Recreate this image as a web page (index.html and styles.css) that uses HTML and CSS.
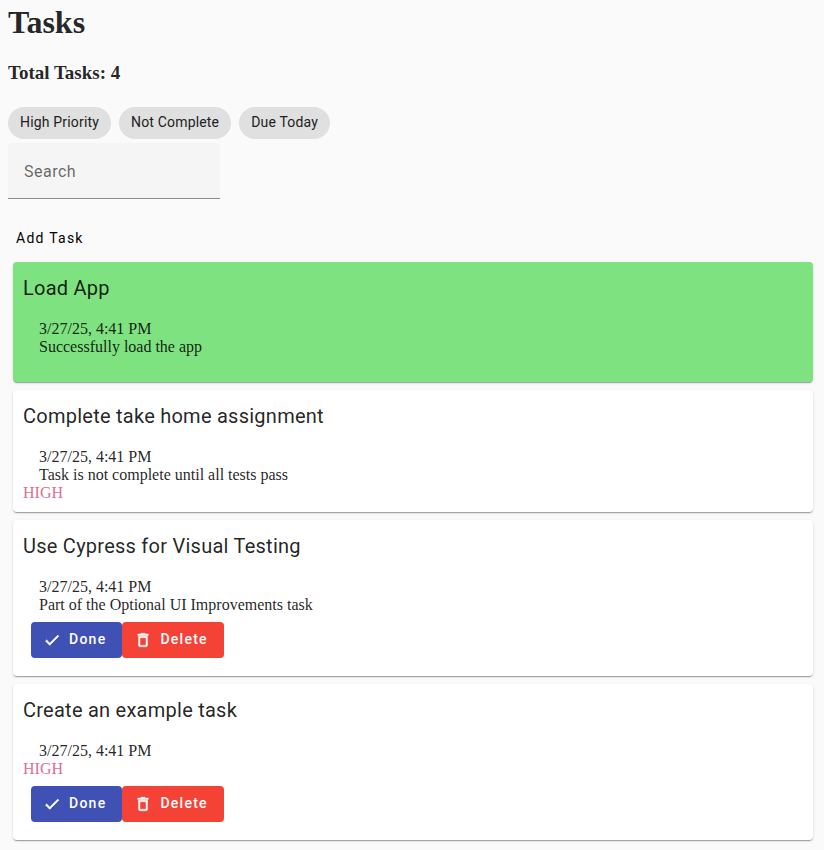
FILE: index.html
```html
<!DOCTYPE html>
<html lang="en">
<head>
  <meta charset="utf-8">
  <meta name="viewport" content="width=device-width, initial-scale=1">
  <title>Tasks</title>
  <link rel="stylesheet" href="styles.css">
</head>
<body>
  <svg class="icon-defs" aria-hidden="true">
    <symbol id="check" viewBox="0 0 24 24"><path stroke="currentColor" d="M9 16.17L4.83 12l-1.42 1.41L9 19 21 7l-1.41-1.41z"/></symbol>
    <symbol id="trash" viewBox="0 0 24 24"><path stroke="currentColor" stroke-width=".6" d="M6 19c0 1.1.9 2 2 2h8c1.1 0 2-.9 2-2V7H6v12zM8 9h8v10H8V9zm7.5-5l-1-1h-5l-1 1H5v2h14V4z"/></symbol>
  </svg>
  <main class="page">
    <h1 class="page-title">Tasks</h1>
    <h3 class="total">Total Tasks: 4</h3>

    <div class="chips">
      <button class="chip" type="button">High Priority</button>
      <button class="chip" type="button">Not Complete</button>
      <button class="chip" type="button">Due Today</button>
    </div>

    <div class="field">
      <input class="field-input" id="search" type="text" placeholder=" ">
      <label class="field-label" for="search">Search</label>
    </div>

    <button class="button button-text" type="button">Add Task</button>

    <section class="task-list">
      <article class="card card-done">
        <h2 class="card-title">Load App</h2>
        <div class="card-content">
          <div>3/27/25, 4:41 PM</div>
          <div>Successfully load the app</div>
        </div>
      </article>

      <article class="card">
        <h2 class="card-title">Complete take home assignment</h2>
        <div class="card-content">
          <div>3/27/25, 4:41 PM</div>
          <div>Task is not complete until all tests pass</div>
        </div>
        <div class="priority">HIGH</div>
      </article>

      <article class="card">
        <h2 class="card-title">Use Cypress for Visual Testing</h2>
        <div class="card-content">
          <div>3/27/25, 4:41 PM</div>
          <div>Part of the Optional UI Improvements task</div>
        </div>
        <div class="card-actions">
          <button class="button button-primary" type="button"><svg class="icon" aria-hidden="true"><use href="#check"/></svg>Done</button>
          <button class="button button-warn" type="button"><svg class="icon" aria-hidden="true"><use href="#trash"/></svg>Delete</button>
        </div>
      </article>

      <article class="card">
        <h2 class="card-title">Create an example task</h2>
        <div class="card-content">
          <div>3/27/25, 4:41 PM</div>
        </div>
        <div class="priority">HIGH</div>
        <div class="card-actions">
          <button class="button button-primary" type="button"><svg class="icon" aria-hidden="true"><use href="#check"/></svg>Done</button>
          <button class="button button-warn" type="button"><svg class="icon" aria-hidden="true"><use href="#trash"/></svg>Delete</button>
        </div>
      </article>
    </section>
  </main>
</body>
</html>
```

FILE: styles.css
```css
* {
  box-sizing: border-box;
}

body {
  margin: 0;
  background: #fafafa;
  color: rgba(0, 0, 0, 0.87);
  font-family: "Liberation Serif", "Times New Roman", serif;
  font-size: 16px;
  line-height: 18px;
}

.icon-defs {
  display: none;
}

.page {
  padding: 4px 8px 8px;
}

.page-title {
  margin: 0 0 22px;
  font-size: 32px;
  line-height: 36px;
}

.total {
  margin: 0 0 23px;
  font-size: 19px;
  line-height: 22px;
}

.chips {
  display: flex;
  flex-wrap: wrap;
  gap: 8px;
  margin-bottom: 4px;
}

.chip {
  height: 32px;
  padding: 0 12px 2px;
  border: 0;
  border-radius: 16px;
  background: #e0e0e0;
  color: #212121;
  font-family: Roboto, sans-serif;
  font-size: 14px;
  line-height: 20px;
  letter-spacing: 0.0125em;
}

.field {
  position: relative;
  width: 212px;
  margin-bottom: 21px;
}

.field-input {
  display: block;
  width: 100%;
  height: 56px;
  padding: 0 16px;
  border: 0;
  border-bottom: 1px solid #8c8c8c;
  border-radius: 4px 4px 0 0;
  outline: 0;
  background: #f5f5f5;
  font-family: Roboto, sans-serif;
  font-size: 16px;
}

.field-label {
  position: absolute;
  top: 17px;
  left: 16px;
  color: rgba(0, 0, 0, 0.6);
  font-family: Roboto, sans-serif;
  line-height: 24px;
  letter-spacing: 0.03em;
  pointer-events: none;
}

.field-input:not(:placeholder-shown) + .field-label {
  top: 2px;
  font-size: 12px;
  line-height: 16px;
}

.button {
  display: flex;
  align-items: center;
  height: 36px;
  padding: 0 16px 2px;
  border: 0;
  border-radius: 4px;
  font-family: Roboto, sans-serif;
  font-size: 14px;
  font-weight: 500;
  letter-spacing: 0.09em;
}

.button-text {
  padding: 0 8px;
  background: transparent;
  color: #000;
  font-weight: 400;
}

.button-primary {
  background: #3f51b5;
  color: #fff;
}

.button-warn {
  background: #f44336;
  color: #fff;
}

.icon {
  width: 18px;
  height: 18px;
  margin: 2px 8px 0 -4px;
  fill: currentColor;
}

.task-list {
  display: flex;
  flex-direction: column;
  gap: 8px;
  padding: 6px 3px 0 5px;
}

.card {
  padding: 10px;
  border-radius: 4px;
  background: #fff;
  box-shadow:
    0 2px 1px -1px rgba(0, 0, 0, 0.2),
    0 1px 1px 0 rgba(0, 0, 0, 0.14),
    0 1px 3px 0 rgba(0, 0, 0, 0.12);
}

.card-done {
  background: #7fe281;
}

.card-title {
  margin: 0;
  font-family: Roboto, sans-serif;
  font-size: 20px;
  font-weight: 400;
  line-height: 32px;
  letter-spacing: 0.0125em;
}

.card-content {
  padding: 16px 16px 0;
}

.card-content:last-child {
  padding-bottom: 16px;
}

.priority {
  color: #db7093;
}

.card-actions {
  display: flex;
  padding: 8px;
}
```
